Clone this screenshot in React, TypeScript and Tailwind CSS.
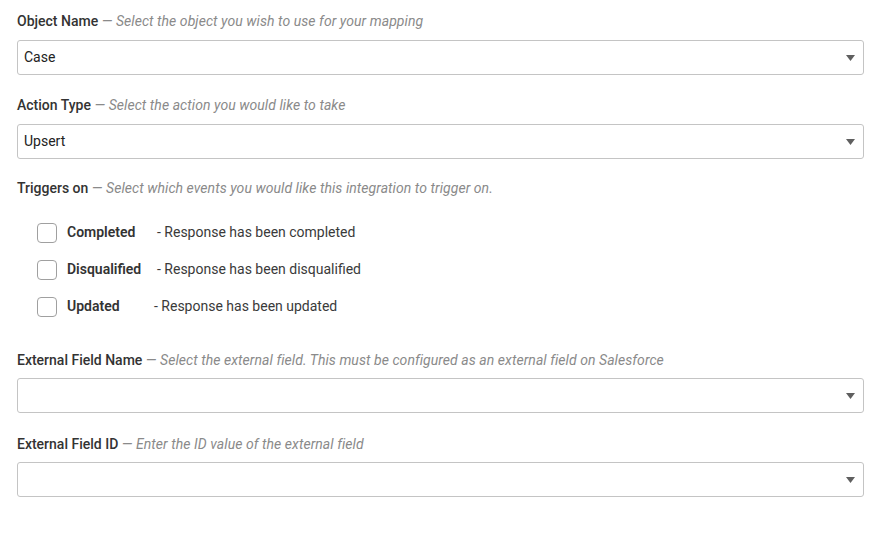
import React from 'react';

function FieldLabel({ title, hint, className = '' }: { title: string; hint: string; className?: string }) {
  return (
    <div className={`h-5 text-[14px] leading-5 ${className}`}>
      <span className="font-medium text-[#333333]">{title}</span>
      <span className="tracking-[0.06px] text-[#8a8a8a] italic"> — {hint}</span>
    </div>
  );
}

function SelectBox({ value, className = '' }: { value?: string; className?: string }) {
  return (
    <div
      className={`flex h-[35px] items-center justify-between rounded-[3px] border border-[#c4c4c4] bg-white pr-[8px] pl-[6px] text-[14px] text-[#222222] ${className}`}
    >
      <span>{value}</span>
      <svg width="9" height="6" viewBox="0 0 9 6" aria-hidden="true">
        <path d="M0 0 H9 L4.5 6 Z" fill="#5f5f5f" />
      </svg>
    </div>
  );
}

const triggers = [
  { name: 'Completed', desc: '- Response has been completed', w: 'w-[90px]' },
  { name: 'Disqualified', desc: '- Response has been disqualified', w: 'w-[90px]' },
  { name: 'Updated', desc: '- Response has been updated', w: 'w-[87px]' },
];

export default function App() {
  return (
    <div className="min-h-[536px] w-full bg-white px-[17px] pt-[11px] font-['Roboto',sans-serif]">
      <FieldLabel title="Object Name" hint="Select the object you wish to use for your mapping" />
      <SelectBox value="Case" className="mt-[9px]" />

      <FieldLabel title="Action Type" hint="Select the action you would like to take" className="mt-5" />
      <SelectBox value="Upsert" className="mt-[9px]" />

      <FieldLabel
        title="Triggers on"
        hint="Select which events you would like this integration to trigger on."
        className="mt-[19px]"
      />
      <div className="mt-4 pl-5">
        {triggers.map((t) => (
          <div key={t.name} className="flex h-[37px] items-center text-[14px]">
            <span className="h-5 w-5 rounded-[4px] border border-[#a0a0a0] bg-white" />
            <span className={`ml-[10px] font-semibold text-[#333333] ${t.w}`}>{t.name}</span>
            <span className="text-[#3a3a3a]">{t.desc}</span>
          </div>
        ))}
      </div>

      <FieldLabel
        title="External Field Name"
        hint="Select the external field. This must be configured as an external field on Salesforce"
        className="mt-[25px]"
      />
      <SelectBox className="mt-2" />

      <FieldLabel title="External Field ID" hint="Enter the ID value of the external field" className="mt-[21px]" />
      <SelectBox className="mt-2" />
    </div>
  );
}
